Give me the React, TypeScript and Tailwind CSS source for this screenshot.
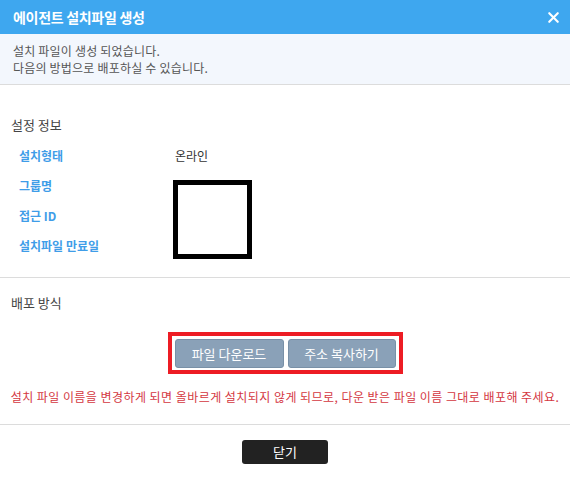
import { X } from "lucide-react";

const font = { fontFamily: '"Noto Sans CJK KR", "Noto Sans", sans-serif' };

const rows = ["설치형태", "그룹명", "접근 ID", "설치파일 만료일"];

export default function App() {
  return (
    <div className="w-[570px] h-[483px] bg-white overflow-hidden" style={font}>
      {/* Title bar */}
      <div className="h-[34px] bg-[#3ea7ef] flex items-center justify-between pl-[13px] pr-[8px]">
        <span className="text-white text-[14px] font-bold tracking-[-0.3px]">에이전트 설치파일 생성</span>
        <X size={17} strokeWidth={3} className="text-white" />
      </div>

      {/* Notice band */}
      <div className="h-[51px] bg-[#f3f7fd] border-b border-[#dcdcdc] pl-[13px] pt-[8px] text-[12px] leading-[17px] tracking-[0.2px] text-[#555]">
        <p>설치 파일이 생성 되었습니다.</p>
        <p>다음의 방법으로 배포하실 수 있습니다.</p>
      </div>

      {/* Settings info */}
      <div className="pl-[11px] pt-[31px] pb-[16px] border-b border-[#dcdcdc]">
        <h3 className="text-[13px] leading-[18px] text-[#444]">설정 정보</h3>
        <div className="grid grid-cols-[156px_1fr] auto-rows-[30px] pl-[8px] mt-[7px]">
          <div className="flex items-center text-[12px] font-semibold text-[#3f9de8]">{rows[0]}</div>
          <div className="flex items-center text-[12px] text-[#333]">온라인</div>
          <div className="flex items-center text-[12px] font-semibold text-[#3f9de8]">{rows[1]}</div>
          <div className="row-span-3 pt-[9px] -ml-[2px]">
            <div className="w-[79px] h-[79px] border-[5px] border-black bg-white" />
          </div>
          <div className="flex items-center text-[12px] font-semibold text-[#3f9de8]">{rows[2]}</div>
          <div className="flex items-center text-[12px] font-semibold text-[#3f9de8]">{rows[3]}</div>
        </div>
      </div>

      {/* Distribution */}
      <div className="pt-[16px] pb-[19px] border-b border-[#dcdcdc]">
        <h3 className="pl-[11px] text-[13px] leading-[18px] text-[#444]">배포 방식</h3>
        <div className="flex justify-center mt-[20px]">
          <div className="border-[4px] border-[#ed1c24] p-[3px] pb-[2px] flex gap-[4px]">
            <button className="w-[109px] h-[29px] rounded-[3px] bg-[#8aa1b8] border border-[#7890a7] text-white text-[13px]">
              파일 다운로드
            </button>
            <button className="w-[108px] h-[29px] rounded-[3px] bg-[#8aa1b8] border border-[#7890a7] text-white text-[13px]">
              주소 복사하기
            </button>
          </div>
        </div>
        <p className="mt-[14px] text-center text-[12px] leading-[17px] tracking-[0.45px] text-[#d4373f]">
          설치 파일 이름을 변경하게 되면 올바르게 설치되지 않게 되므로, 다운 받은 파일 이름 그대로 배포해 주세요.
        </p>
      </div>

      {/* Footer */}
      <div className="flex justify-center pt-[15px]">
        <button className="w-[86px] h-[24px] rounded-[3px] bg-[#222] text-white text-[13px]">닫기</button>
      </div>
    </div>
  );
}
